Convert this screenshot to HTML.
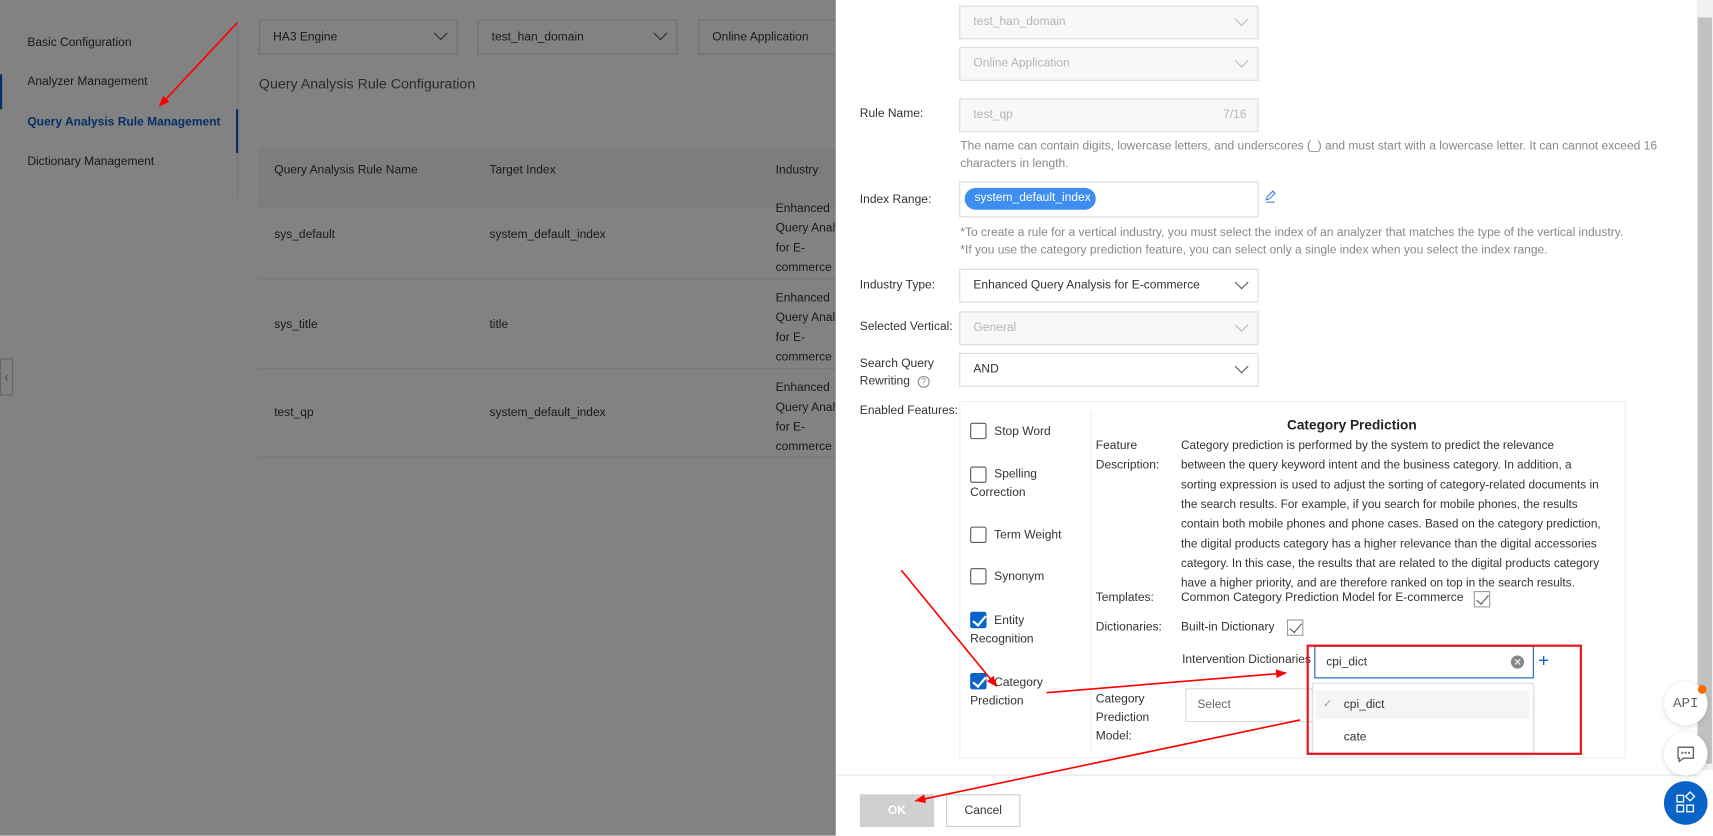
<!DOCTYPE html>
<html><head><meta charset="utf-8"><style>
*{box-sizing:border-box;margin:0;padding:0}
html,body{width:1713px;height:835px;overflow:hidden;background:#fff}
#s{position:absolute;left:0;top:0;width:1568px;height:765px;transform:scale(1.0925);transform-origin:0 0;font-family:"Liberation Sans",sans-serif;font-size:11px;color:#333}
.a{position:absolute}
.t{position:absolute;white-space:nowrap}
.sel{position:absolute;border:1px solid #d9d9d9;background:#fff;padding-left:12px;line-height:29px;height:31px}
.dis{background:#f7f8fa;color:#b5b5b5;border-color:#dcdcdc}
.chev{position:absolute;right:10px;width:9px;height:9px;border-right:1.3px solid #555;border-bottom:1.3px solid #555;transform:rotate(45deg);top:7px}
.dis .chev{border-color:#bbb}
.lbl{position:absolute;left:787px;color:#333;white-space:nowrap}
.cb{position:absolute;left:888px;width:15px;height:15px;border:1px solid #555;border-radius:2px;background:#fff}
.cb.on{background:#0a64c8;border-color:#0a64c8}
.cb.on:after{content:"";position:absolute;left:4px;top:0px;width:5px;height:10px;border-right:2px solid #fff;border-bottom:2px solid #fff;transform:rotate(40deg)}
.ck{position:absolute;width:15px;height:15px;border:1px solid #999}
.ck:after{content:"";position:absolute;left:4px;top:0px;width:5px;height:10px;border-right:1.5px solid #555;border-bottom:1.5px solid #555;transform:rotate(40deg)}
.fl{position:absolute;left:910px;line-height:17px;color:#333}
.help{position:absolute;left:879px;color:#888;line-height:16px;white-space:nowrap}
</style></head><body><div id="s">
<div class="a" style="left:0;top:0;width:766px;height:765px;background:#fff;overflow:hidden">
 <div class="t" style="left:25px;top:33px">Basic Configuration</div>
 <div class="t" style="left:25px;top:69px">Analyzer Management</div>
 <div class="t" style="left:25px;top:106px;color:#0a5fc8;font-weight:bold">Query Analysis Rule Management</div>
 <div class="t" style="left:25px;top:142px">Dictionary Management</div>
 <div class="a" style="left:217px;top:20px;width:1px;height:160px;background:#e6e6e6"></div>
 <div class="a" style="left:216px;top:100px;width:2px;height:40px;background:#0a5fc8"></div>
 <div class="a" style="left:0;top:68px;width:2px;height:32px;background:#0a5fc8"></div>
 <div class="sel" style="left:237px;top:18px;width:182px;height:32px;line-height:30px">HA3 Engine<div class="chev"></div></div>
 <div class="sel" style="left:437px;top:18px;width:183px;height:32px;line-height:30px">test_han_domain<div class="chev"></div></div>
 <div class="sel" style="left:639px;top:18px;width:140px;height:32px;line-height:30px">Online Application</div>
 <div class="t" style="left:237px;top:69px;font-size:13px;color:#555">Query Analysis Rule Configuration</div>
 <div class="a" style="left:237px;top:136px;width:540px;height:54px;background:#f5f5f5;border-bottom:1px solid #e8e8e8"></div>
 <div class="t" style="left:251px;top:150px">Query Analysis Rule Name</div>
 <div class="t" style="left:448px;top:150px">Target Index</div>
 <div class="t" style="left:710px;top:150px">Industry</div>
 <div class="a" style="left:237px;top:255px;width:540px;height:1px;background:#e8e8e8"></div>
 <div class="a" style="left:237px;top:337px;width:540px;height:1px;background:#e8e8e8"></div>
 <div class="a" style="left:237px;top:418px;width:540px;height:1px;background:#e8e8e8"></div>
 <div class="t" style="left:251px;top:209px">sys_default</div><div class="t" style="left:448px;top:209px">system_default_index</div>
 <div class="t" style="left:251px;top:291px">sys_title</div><div class="t" style="left:448px;top:291px">title</div>
 <div class="t" style="left:251px;top:372px">test_qp</div><div class="t" style="left:448px;top:372px">system_default_index</div>
 <div class="a" style="left:710px;top:182px;line-height:18px;white-space:nowrap">Enhanced<br>Query Analysis<br>for E-<br>commerce</div>
 <div class="a" style="left:710px;top:264px;line-height:18px;white-space:nowrap">Enhanced<br>Query Analysis<br>for E-<br>commerce</div>
 <div class="a" style="left:710px;top:346px;line-height:18px;white-space:nowrap">Enhanced<br>Query Analysis<br>for E-<br>commerce</div>
 <div class="a" style="left:0;top:328px;width:12px;height:34px;border:1px solid #ccc;background:#fff;color:#999;font-size:13px;line-height:32px;text-align:center">‹</div>
 <div class="a" style="left:0;top:0;width:766px;height:765px;background:rgba(0,0,0,.49)"></div>
</div>
<div class="a" style="left:765px;top:0;width:803px;height:765px;background:#fff"></div>
<div class="sel dis" style="left:878px;top:5px;width:274px">test_han_domain<div class="chev"></div></div>
<div class="sel dis" style="left:878px;top:43px;width:274px">Online Application<div class="chev"></div></div>
<div class="lbl" style="top:98px">Rule Name:</div>
<div class="sel dis" style="left:878px;top:90px;width:274px">test_qp<span style="position:absolute;right:10px">7/16</span></div>
<div class="help" style="top:126px">The name can contain digits, lowercase letters, and underscores (_) and must start with a lowercase letter. It can cannot exceed 16<br>characters in length.</div>
<div class="lbl" style="top:177px">Index Range:</div>
<div class="sel" style="left:878px;top:166px;width:274px;height:33px"></div>
<div class="a" style="left:883px;top:172px;width:120px;height:20px;border-radius:10px;background:#3d8ef0;color:#fff;line-height:19px;padding-left:9px;white-space:nowrap">system_default_index</div>
<svg class="a" style="left:1157px;top:174px" width="12" height="12"><path d="M2 9l1-3 5-5 2 2-5 5zM2 11h8" fill="none" stroke="#3d7fd8" stroke-width="1"/></svg>
<div class="help" style="top:205px">*To create a rule for a vertical industry, you must select the index of an analyzer that matches the type of the vertical industry.<br>*If you use the category prediction feature, you can select only a single index when you select the index range.</div>
<div class="lbl" style="top:255px">Industry Type:</div>
<div class="sel" style="left:878px;top:246px;width:274px">Enhanced Query Analysis for E-commerce<div class="chev"></div></div>
<div class="lbl" style="top:293px">Selected Vertical:</div>
<div class="sel dis" style="left:878px;top:285px;width:274px">General<div class="chev"></div></div>
<div class="lbl" style="top:325px;line-height:16px">Search Query<br>Rewriting <span style="display:inline-block;width:11px;height:11px;border:1px solid #888;border-radius:50%;font-size:8px;line-height:9px;text-align:center;margin-left:4px;color:#888;vertical-align:middle">?</span></div>
<div class="sel" style="left:878px;top:323px;width:274px">AND<div class="chev"></div></div>
<div class="lbl" style="top:370px">Enabled Features:</div>
<div class="a" style="left:878px;top:367px;width:610px;height:327px;border:1px solid #eee"></div>
<div class="a" style="left:998px;top:377px;width:1px;height:312px;background:#eee"></div>
<div class="cb" style="top:387px"></div><div class="fl" style="top:387px">Stop Word</div>
<div class="cb" style="top:427px"></div><div class="fl" style="top:426px;left:888px;text-indent:22px">Spelling<br>Correction</div>
<div class="cb" style="top:482px"></div><div class="fl" style="top:482px">Term Weight</div>
<div class="cb" style="top:520px"></div><div class="fl" style="top:520px">Synonym</div>
<div class="cb on" style="top:560px"></div><div class="fl" style="top:560px;left:888px;text-indent:22px">Entity<br>Recognition</div>
<div class="cb on" style="top:616px"></div><div class="fl" style="top:617px;left:888px;text-indent:22px">Category<br>Prediction</div>
<div class="t" style="left:1178px;top:382px;font-size:12.5px;font-weight:bold;color:#222">Category Prediction</div>
<div class="a" style="left:1003px;top:399px;line-height:18px">Feature<br>Description:</div>
<div class="a" style="left:1081px;top:399px;line-height:18px;font-size:10.8px;white-space:nowrap">Category prediction is performed by the system to predict the relevance<br>between the query keyword intent and the business category. In addition, a<br>sorting expression is used to adjust the sorting of category-related documents in<br>the search results. For example, if you search for mobile phones, the results<br>contain both mobile phones and phone cases. Based on the category prediction,<br>the digital products category has a higher relevance than the digital accessories<br>category. In this case, the results that are related to the digital products category<br>have a higher priority, and are therefore ranked on top in the search results.</div>
<div class="t" style="left:1003px;top:541px">Templates:</div>
<div class="t" style="left:1081px;top:541px">Common Category Prediction Model for E-commerce</div>
<div class="ck" style="left:1349px;top:541px"></div>
<div class="t" style="left:1003px;top:568px">Dictionaries:</div>
<div class="t" style="left:1081px;top:568px">Built-in Dictionary</div>
<div class="ck" style="left:1178px;top:567px"></div>
<div class="t" style="left:1082px;top:598px">Intervention Dictionaries</div>
<div class="a" style="left:1203px;top:591px;width:201px;height:30px;border:1px solid #0a64c8;background:#fff;padding-left:10px;line-height:28px">cpi_dict<span style="position:absolute;right:8px;top:8px;width:12px;height:12px;border-radius:50%;background:#888;color:#fff;font-size:9px;line-height:12px;text-align:center">✕</span></div>
<div class="t" style="left:1408px;top:595px;color:#0a64c8;font-size:17px">+</div>
<div class="a" style="left:1003px;top:632px;line-height:17px">Category<br>Prediction<br>Model:</div>
<div class="a" style="left:1085px;top:630px;width:120px;height:31px;border:1px solid #d9d9d9;padding-left:10px;line-height:29px;color:#666">Select</div>
<div class="a" style="left:1201px;top:625px;width:203px;height:65px;background:#fff;border:1px solid #ddd;box-shadow:0 2px 4px rgba(0,0,0,.1)"></div>
<div class="a" style="left:1204px;top:632px;width:196px;height:26px;background:#f4f5f6"></div>
<div class="t" style="left:1211px;top:639px;color:#999;font-size:10px">✓</div>
<div class="t" style="left:1230px;top:639px">cpi_dict</div>
<div class="t" style="left:1230px;top:669px">cate</div>
<div class="a" style="left:1196px;top:590px;width:252px;height:101px;border:2px solid #e8141a"></div>
<div class="a" style="left:765px;top:709px;width:788px;height:1px;background:#e5e5e5"></div>
<div class="a" style="left:787px;top:727px;width:68px;height:30px;background:#d0d0d0;color:#fff;text-align:center;line-height:30px;font-weight:bold">OK</div>
<div class="a" style="left:866px;top:727px;width:68px;height:30px;border:1px solid #ccc;text-align:center;line-height:28px;color:#333">Cancel</div>
<div class="a" style="left:1553px;top:0;width:15px;height:705px;background:#f1f1f1"></div>
<div class="a" style="left:1554px;top:16px;width:13px;height:683px;background:#c1c1c1"></div>
<div class="t" style="left:1557px;top:694px;font-size:7px;color:#888">▼</div>
<div class="a" style="left:1523px;top:624px;width:40px;height:40px;border-radius:50%;background:#fff;box-shadow:0 1px 5px rgba(0,0,0,.15);text-align:center;line-height:40px;color:#666;font-size:13px;font-family:'Liberation Mono',monospace">API</div>
<div class="a" style="left:1554px;top:627px;width:8px;height:8px;border-radius:50%;background:#ff6a00"></div>
<div class="a" style="left:1523px;top:670px;width:40px;height:40px;border-radius:50%;background:#fff;box-shadow:0 1px 5px rgba(0,0,0,.15)"><svg width="40" height="40"><path d="M13 14h14v10h-9l-4 3v-3h-1z" fill="none" stroke="#666" stroke-width="1.3"/><circle cx="17" cy="19" r="1" fill="#666"/><circle cx="20" cy="19" r="1" fill="#666"/><circle cx="23" cy="19" r="1" fill="#666"/></svg></div>
<div class="a" style="left:1523px;top:715px;width:40px;height:40px;border-radius:50%;background:#0a64c8"><svg width="40" height="40" fill="none" stroke="#fff" stroke-width="1.2"><rect x="12" y="13" width="6" height="6"/><rect x="12" y="22" width="6" height="6"/><rect x="21" y="22" width="6" height="6"/><path d="M24 10l4 4-4 4-4-4z"/></svg></div>
<svg class="a" style="left:0;top:0" width="1568" height="765"><defs><marker id="m" markerWidth="10" markerHeight="8" refX="9" refY="4" orient="auto" markerUnits="userSpaceOnUse"><path d="M0 0L10 4L0 8z" fill="#f00"/></marker></defs>
<g stroke="#f00" stroke-width="1.5" fill="none" marker-end="url(#m)">
<path d="M217 21L146 97"/><path d="M825 522L912 628"/><path d="M958 634L1177 616"/><path d="M1190 659L838 733"/></g></svg>
</div></body></html>
